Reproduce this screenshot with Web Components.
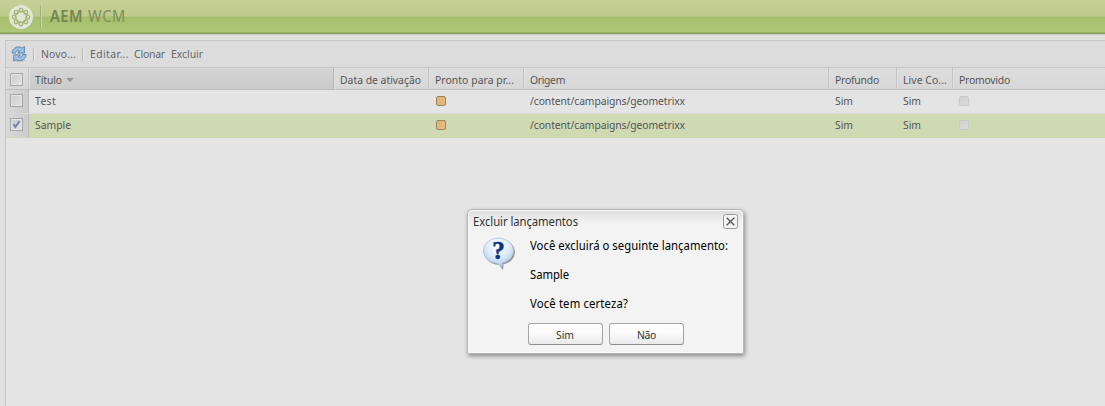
<!DOCTYPE html>
<html lang="pt-BR">
<head>
<meta charset="utf-8">
<title>AEM WCM</title>
<style>
html,body{margin:0;width:1105px;height:406px;overflow:hidden;background:#dfdfdf;font:11px "Noto Sans","Open Sans",sans-serif;color:#555}
</style>
</head>
<body>
<wcm-app></wcm-app>
<script>
const define = (name, html, ready) => customElements.define(name, class extends HTMLElement {
  connectedCallback() {
    if (this.shadowRoot) return;
    const t = document.createElement('template');
    t.innerHTML = html;
    this.attachShadow({mode: 'open'}).append(t.content.cloneNode(true));
    if (ready) ready(this, this.shadowRoot);
  }
});

// A slightly condensed label whose tracking is adjusted to a given width.
const CONDENSE = 0.94;
define('wcm-label', `<style>:host{display:inline-block;white-space:nowrap;flex:none}span{display:inline-block;transform-origin:0 50%}</style><span><slot></slot></span>`, (el, root) => {
  const w = +el.getAttribute('w'), s = root.querySelector('span');
  s.style.letterSpacing = (w / CONDENSE - s.getBoundingClientRect().width) / el.textContent.length + 'px';
  s.style.transform = `scaleX(${CONDENSE})`;
  el.style.width = w + 'px';
});

define('wcm-header', `<style>
:host{display:flex;box-sizing:border-box;height:35px;padding-left:9px;align-items:flex-start;background:linear-gradient(#c7cf95 0,#bfcb8b 16px,#a5be6b 17px,#adc778 32px,#869e59 33px,#869e59 34px,#c9cdc3 34px)}
svg{margin-top:5px;flex:none}
i{width:1px;height:24px;margin:5px 8px 0 7px;background:#a0af78;border-right:1px solid #cad5a5}
.t{display:flex;gap:5px;color:#7f905a;font-size:15.5px;line-height:20px;margin-top:6px}
b{font-weight:600;color:#74864f}
</style>
<svg width="24" height="24" viewBox="0 0 24 24"><circle cx="12" cy="12" r="12" fill="#e2e5d9"/><g fill="none" stroke="#a6b974" stroke-width="1.3"><circle cx="12" cy="12" r="5.6"/><circle cx="12" cy="5.2" r="1.9"/><circle cx="12" cy="18.8" r="1.9"/><circle cx="5.2" cy="12" r="1.9"/><circle cx="18.8" cy="12" r="1.9"/><circle cx="7.2" cy="7.2" r="1.9"/><circle cx="16.8" cy="7.2" r="1.9"/><circle cx="7.2" cy="16.8" r="1.9"/><circle cx="16.8" cy="16.8" r="1.9"/></g></svg>
<i></i><div class="t"><wcm-label w="33"><b>AEM</b></wcm-label><wcm-label w="38">WCM</wcm-label></div>`);

define('wcm-toolbar', `<style>
:host{display:flex;box-sizing:border-box;height:27px;align-items:center;padding-left:5px;background:#dcdcdc;border-bottom:1px solid #c6c6c6;color:#666}
i{width:1px;height:13px;background:#b9b9b9;border-right:1px solid #e9e9e9}
svg{flex:none}
wcm-label{margin-top:-1px}
</style>
<svg width="16" height="16" viewBox="0 0 16 16"><ellipse cx="8.5" cy="14.4" rx="6" ry="1.4" fill="#aaa" opacity=".5"/><g stroke="#5580ab" stroke-width=".9" stroke-linejoin="round" fill="#9cc3e3"><path d="M1 7.1C1.2 2.6 5.4.1 9.6 1.2l1.6.9L13.4.5v6.6H6.7l2-2C6.6 4 4.8 4.8 4.4 7.1Z"/><path d="M15.1 8.5c-.2 4.5-4.4 7-8.6 5.9l-1.6-.9-2.2 1.6V8.9h6.7l-2 2c2.1 1.1 3.8.2 4.3-2.4Z"/></g></svg>
<i style="margin:0 6px 0 6px"></i><wcm-label w="35">Novo...</wcm-label><i style="margin:0 6px 0 6px"></i><wcm-label w="39">Editar...</wcm-label><wcm-label w="31" style="margin-left:5px">Clonar</wcm-label><wcm-label w="32" style="margin-left:6px">Excluir</wcm-label>`);

define('wcm-check', `<style>
:host{display:block;box-sizing:border-box;width:13px;height:13px;border:1px solid #a3a6a8;background:linear-gradient(135deg,#c9cbcd,#e4e4e4);box-shadow:inset 0 0 0 1px #e4e4e4}
svg{display:none}:host([checked]) svg{display:block}
</style><svg width="11" height="11" viewBox="0 0 11 11"><path d="M2.5 5 4.4 8 8.5 2.2" fill="none" stroke="#7886a5" stroke-width="2"/></svg>`);

define('wcm-status', `<style>
:host{display:block;box-sizing:border-box;width:10px;height:10px;border:1px solid #c9c9c9;border-radius:2px;background:linear-gradient(135deg,#d1d1d1,#dcdcdc);margin:0 0 0 1px}
:host([on]){border-color:#a28259;background:linear-gradient(135deg,#e2b276,#e4be80)}
</style>`);

define('wcm-row', `<style>
:host{display:grid;grid-template-columns:23px 305px 95px 95px 305px 68px 56px 1fr;box-sizing:border-box;height:24px;background:#e4e4e4;border-bottom:1px solid #dadada;color:#555}
:host([selected]){background:#cfdab3;border-color:#cfdab3}
:host([head]){height:22px;background:linear-gradient(#dadada,#cfcfcf);border-bottom:1px solid #bfbfbf}
::slotted(*){display:flex;align-items:center;padding:0 0 2px 6px;min-width:0;box-sizing:border-box}
::slotted(:first-child){padding-left:4px;background:linear-gradient(90deg,#dadada,#cbcbcb);border-right:1px solid #bdbdbd}
:host([head]) ::slotted(*){padding-bottom:0;padding-top:1px;border-right:1px solid #c3c3c3;box-shadow:inset 1px 0 #e1e1e1;background:linear-gradient(#dddddd,#d7d7d7)}
:host([head]) ::slotted(:nth-child(2)){background:linear-gradient(#d5d5d5,#cacaca);border-right-color:#b5b5b5}
:host([head]) ::slotted(:last-child){border-right:0}
</style><slot></slot>`);

define('wcm-grid', `<style>
:host{display:flex;flex-direction:column;flex:1;background:#e4e4e4}
.arrow{width:0;border:4px solid transparent;border-top-color:#999;border-bottom:0;margin:2px 0 0 4px}
</style>
<wcm-row head><div><wcm-check></wcm-check></div><div><wcm-label w="27">Título</wcm-label><span class="arrow"></span></div><div><wcm-label w="81">Data de ativação</wcm-label></div><div><wcm-label w="79">Pronto para pr...</wcm-label></div><div><wcm-label w="35">Origem</wcm-label></div><div><wcm-label w="44">Profundo</wcm-label></div><div><wcm-label w="44">Live Co...</wcm-label></div><div><wcm-label w="51">Promovido</wcm-label></div></wcm-row>
<wcm-row><div><wcm-check></wcm-check></div><div><wcm-label w="21">Test</wcm-label></div><div></div><div><wcm-status on></wcm-status></div><div><wcm-label w="155">/content/campaigns/geometrixx</wcm-label></div><div><wcm-label w="18">Sim</wcm-label></div><div><wcm-label w="18">Sim</wcm-label></div><div><wcm-status style="margin-left:0"></wcm-status></div></wcm-row>
<wcm-row selected><div><wcm-check checked></wcm-check></div><div><wcm-label w="36">Sample</wcm-label></div><div></div><div><wcm-status on></wcm-status></div><div><wcm-label w="155">/content/campaigns/geometrixx</wcm-label></div><div><wcm-label w="18">Sim</wcm-label></div><div><wcm-label w="18">Sim</wcm-label></div><div><wcm-status style="margin-left:0"></wcm-status></div></wcm-row>`);

define('wcm-button', `<style>
:host{display:flex;box-sizing:border-box;width:75px;height:22px;align-items:center;justify-content:center;border:1px solid #a5a5a5;border-bottom-color:#8d8d8d;border-radius:3px;background:linear-gradient(#fff,#fafafa 45%,#e9e9e9);color:#333;font-size:11px;padding:1px 1px 0 0}
</style><slot></slot>`);

define('wcm-dialog', `<style>
:host{position:absolute;left:467px;top:209px;width:277px;height:145px;box-sizing:border-box;border:1px solid #b5b5b5;border-radius:5px 5px 2px 2px;background:linear-gradient(#dedede,#f3f3f3 14px);box-shadow:inset 0 0 0 1px #fafafa,1px 2px 4px rgba(0,0,0,.4);color:#000;font-size:12px}
header{display:flex;justify-content:space-between;padding:4px 5px 0;height:23px;box-sizing:border-box;color:#333}
header wcm-label{line-height:16px}
.body{display:flex;padding-left:14px;gap:14px;height:86px}
.icon{margin-top:4px;flex:none}
.text{padding-top:6px;line-height:14.5px}
.text div{height:14.5px}
.text div+div{margin-top:14.5px}
footer{display:flex;gap:6px;padding:4px 0 0 60px}
</style>
<header><wcm-label w="105">Excluir lançamentos</wcm-label><svg width="15" height="15" viewBox="0 0 15 15"><rect x=".5" y=".5" width="14" height="14" rx="2" fill="#f3f3f3" stroke="#999"/><path d="m3.7 3.7 7.6 7.6m0-7.6-7.6 7.6" stroke="#555" stroke-width="1.3"/></svg></header>
<div class="body"><svg class="icon" width="34" height="34" viewBox="0 0 34 34"><defs><radialGradient id="b" cx=".5" cy=".25" r=".8"><stop stop-color="#fff"/><stop offset=".5" stop-color="#dceafa"/><stop offset="1" stop-color="#95bce8"/></radialGradient></defs><path d="M16.5 1.5C7.8 1.5 1.5 7 1.5 14.1c0 7 6 12.4 14.2 12.7 2.2 1 3.2 3 3.8 5.2.8-1.2 1.3-3.2 1-5.7C27.5 25 32 20.1 32 14.1 32 7 25.5 1.5 16.5 1.5Z" fill="#777" opacity=".75" transform="translate(.9 1)"/><path d="M16.5 1.2C8 1.2 1.5 6.8 1.5 13.8c0 7 6 12.1 13.7 12.6 2.3 1 3.5 2.8 4.3 5.1.6-1.5.9-3.3.7-5.5 6.8-1.3 11.3-6.4 11.3-12.2 0-7-6.4-12.6-15-12.6Z" fill="url(#b)" stroke="#a3b9d0" stroke-width=".7"/><text x="16.4" y="22.2" text-anchor="middle" font-family="Liberation Serif" font-weight="700" font-size="25" fill="#063482" stroke="#063482" stroke-width=".6">?</text></svg>
<div class="text"><div><wcm-label w="198">Você excluirá o seguinte lançamento:</wcm-label></div><div><wcm-label w="39">Sample</wcm-label></div><div><wcm-label w="98">Você tem certeza?</wcm-label></div></div></div>
<footer><wcm-button><wcm-label w="18">Sim</wcm-label></wcm-button><wcm-button><wcm-label w="19">Não</wcm-label></wcm-button></footer>`);

define('wcm-app', `<style>
:host{display:flex;flex-direction:column;width:1105px;height:406px}
main{display:flex;flex-direction:column;flex:1;margin:5px 0 0 5px;border:1px solid #c6c6c6;border-right:0;border-bottom:0}
</style><wcm-header></wcm-header><main><wcm-toolbar></wcm-toolbar><wcm-grid></wcm-grid></main><wcm-dialog></wcm-dialog>`);
</script>
</body>
</html>
